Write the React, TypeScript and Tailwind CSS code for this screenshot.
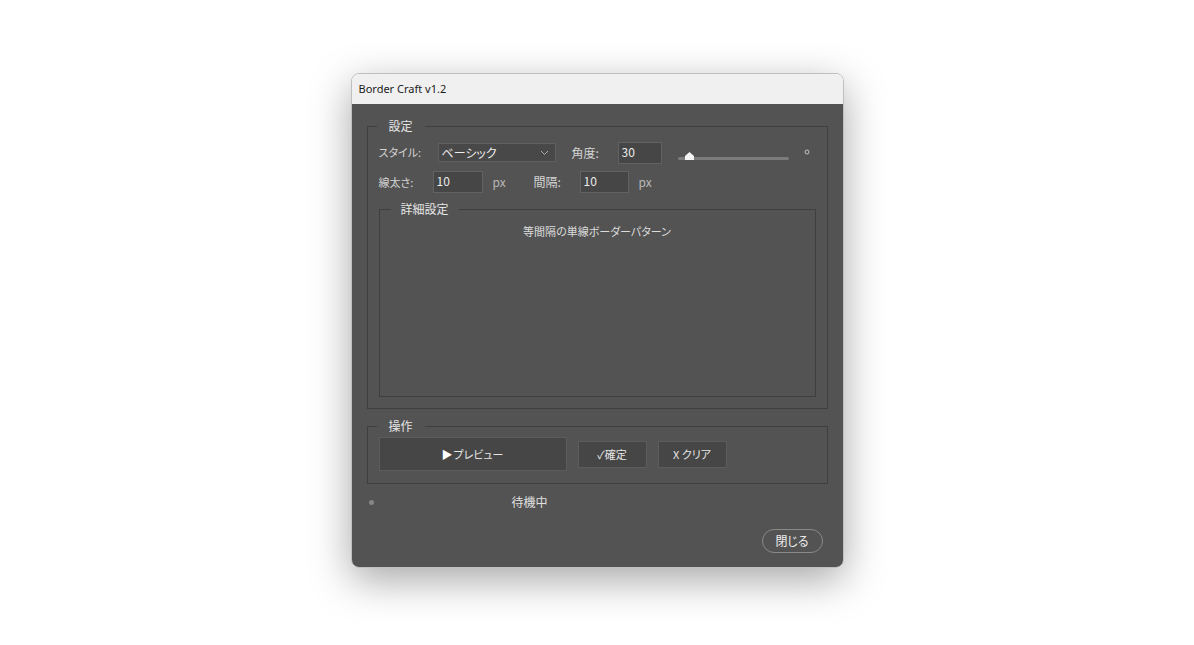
import React from 'react';

const jp = { fontFamily: '"Noto Sans CJK JP", "Noto Sans", sans-serif' };

const Legend = ({ children, className }: { children: React.ReactNode; className: string }) => (
  <legend className={`leading-[16px] text-[12px] text-[#e6e6e6] ${className}`}>{children}</legend>
);

const TextBox = ({ value, width }: { value: string; width: string }) => (
  <input
    readOnly
    defaultValue={value}
    className={`${width} h-[22px] bg-[#464646] border border-[#626262] pl-[3px] pb-[3px] text-[12px] text-[#ececec] outline-none`}
    style={jp}
  />
);

export default function App() {
  return (
    <div className="w-full h-[645px] bg-white flex justify-center pt-[73px] [font-feature-settings:'palt']" style={jp}>
      <div className="w-[493px] h-[495px] rounded-[8px] overflow-hidden border border-black/25 shadow-[0_12px_40px_rgba(0,0,0,0.35)] flex flex-col">
        {/* title bar */}
        <div className="h-[30px] shrink-0 bg-[#f0f0f0] flex items-center pl-[7px]">
          <span className="text-[11px] text-[#1b1b1b]" style={{ fontFamily: '"Noto Sans", sans-serif' }}>
            Border Craft v1.2
          </span>
        </div>

        {/* body */}
        <div className="flex-1 bg-[#535353] px-[15px] pt-[14px] flex flex-col text-[11px] text-[#d4d4d4]">
          {/* 設定 */}
          <fieldset className="h-[291px] border border-[#3f3f3f] pl-[11px] pr-[11px]">
            <Legend className="-ml-[2px] px-[12px]">設定</Legend>

            <div className="flex items-center h-[21px] mt-[8px]">
              <span className="w-[59px]">スタイル:</span>
              <div className="w-[118px] h-[19px] bg-[#484848] border border-[#606060] flex items-center justify-between pl-[3px] pr-[6px] text-[12px] text-[#ececec]">
                <span className="leading-[16px]">ベーシック</span>
                <svg width="9" height="6" viewBox="0 0 9 6" fill="none">
                  <path d="M1 1l3.5 3.5L8 1" stroke="#a8a8a8" strokeWidth="1" />
                </svg>
              </div>
              <span className="w-[46px] ml-[16px] text-[12px]">角度:</span>
              <TextBox value="30" width="w-[44px]" />
              <div className="relative ml-[16px] mt-[12px] w-[111px] h-[3px] bg-[#7b7b7b] rounded-full">
                <svg className="absolute left-[7px] top-[-5px]" width="9" height="8" viewBox="0 0 9 8">
                  <path d="M4.5 0L9 4v4H0V4z" fill="#f4f4f4" />
                </svg>
              </div>
              <svg className="ml-[15px] mb-[2px]" width="6" height="6" viewBox="0 0 6 6" fill="none">
                <circle cx="3" cy="3" r="2" stroke="#c4c4c4" strokeWidth="1" />
              </svg>
            </div>

            <div className="flex items-center h-[22px] mt-[8px]">
              <span className="w-[54px]">線太さ:</span>
              <TextBox value="10" width="w-[50px]" />
              <span className="w-[51px] pl-[10px] text-[12px] text-[#b8b8b8]">px</span>
              <span className="w-[46px] text-[12px]">間隔:</span>
              <TextBox value="10" width="w-[49px]" />
              <span className="pl-[10px] text-[12px] text-[#b8b8b8]">px</span>
            </div>

            {/* 詳細設定 */}
            <fieldset className="mt-[8px] h-[196px] border border-[#3f3f3f]">
              <Legend className="ml-[11px] px-[10px]">詳細設定</Legend>
              <div className="mt-[6px] text-center leading-[16px] text-[#dcdcdc]">等間隔の単線ボーダーパターン</div>
            </fieldset>
          </fieldset>

          {/* 操作 */}
          <fieldset className="mt-[9px] h-[66px] border border-[#3f3f3f] pl-[11px]">
            <Legend className="-ml-[2px] px-[12px]">操作</Legend>
            <div className="flex items-center gap-[11px] mt-[3px]">
              <button className="w-[188px] h-[34px] bg-[#464646] border border-[#5c5c5c] text-[#e6e6e6] flex items-center justify-center">
                <span className="text-[11px] text-white mr-[1px]">▶</span>プレビュー
              </button>
              <button className="w-[69px] h-[27px] bg-[#464646] border border-[#5c5c5c] text-[#e6e6e6]">✓確定</button>
              <button className="w-[69px] h-[27px] bg-[#464646] border border-[#5c5c5c] text-[#e6e6e6]">X クリア</button>
            </div>
          </fieldset>

          {/* status */}
          <div className="mt-[8px] h-[20px] flex items-center">
            <span className="ml-[2px] w-[5px] h-[5px] rounded-full bg-[#858585]" />
            <span className="ml-[138px] text-[12px] text-[#e0e0e0]">待機中</span>
          </div>

          <div className="mt-[17px] flex justify-end pr-[5px]">
            <button className="w-[61px] h-[24px] rounded-full border border-[#8a8a8a] text-[#ececec] text-[12px]">
              閉じる
            </button>
          </div>
        </div>
      </div>
    </div>
  );
}
